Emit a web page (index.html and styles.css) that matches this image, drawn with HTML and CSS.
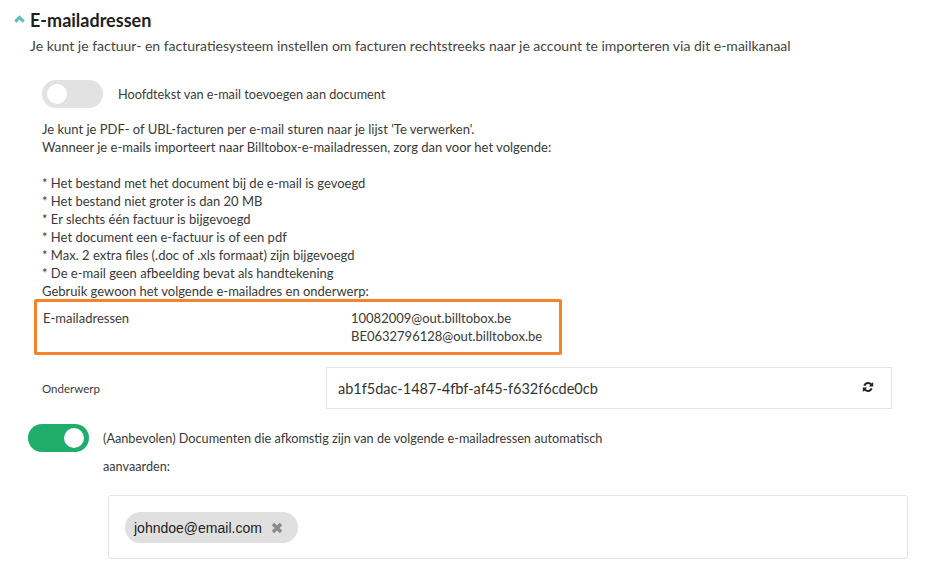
FILE: index.html
```html
<!doctype html>
<html lang="nl">

<head>
    <meta charset="UTF-8">
    <title>E-mailadressen</title>
    <link rel="stylesheet" href="styles.css">
</head>

<body>
    <section class="panel">
        <h2 class="panel-title">
            <svg class="chevron" width="11" height="8" viewBox="0 0 11 8">
                <path d="M1.3 6.6 L5.5 2.4 L9.7 6.6" fill="none" stroke="#5cbfb9" stroke-width="3"/>
            </svg>
            E-mailadressen
        </h2>
        <p class="intro">Je kunt je factuur- en facturatiesysteem instellen om facturen rechtstreeks naar je account te importeren via dit e-mailkanaal</p>

        <div class="switch-row first">
            <span class="switch"><span class="knob"></span></span>
            <span class="switch-label">Hoofdtekst van e-mail toevoegen aan document</span>
        </div>

        <div class="info">
            <p>Je kunt je PDF- of UBL-facturen per e-mail sturen naar je lijst 'Te verwerken'.<br>
            Wanneer je e-mails importeert naar Billtobox-e-mailadressen, zorg dan voor het volgende:</p>
            <p>* Het bestand met het document bij de e-mail is gevoegd<br>
            * Het bestand niet groter is dan 20 MB<br>
            * Er slechts één factuur is bijgevoegd<br>
            * Het document een e-factuur is of een pdf<br>
            * Max. 2 extra files (.doc of .xls formaat) zijn bijgevoegd<br>
            * De e-mail geen afbeelding bevat als handtekening<br>
            Gebruik gewoon het volgende e-mailadres en onderwerp:</p>
        </div>

        <div class="address-box">
            <span class="address-label">E-mailadressen</span>
            <span class="address-list">
                10082009@out.billtobox.be<br>
                BE0632796128@out.billtobox.be
            </span>
        </div>

        <div class="subject-row">
            <span class="subject-label">Onderwerp</span>
            <div class="subject-input">
                <span>ab1f5dac-1487-4fbf-af45-f632f6cde0cb</span>
                <svg class="refresh" width="12" height="12" viewBox="0 0 12 12">
                    <path d="M10 4.2 A4.3 4.3 0 0 0 2.3 4.6" fill="none" stroke="#222" stroke-width="2"/>
                    <path d="M11.2 1 L11.2 5.4 L6.8 5.4 Z" fill="#222"/>
                    <path d="M2 7.8 A4.3 4.3 0 0 0 9.7 7.4" fill="none" stroke="#222" stroke-width="2"/>
                    <path d="M0.8 11 L0.8 6.6 L5.2 6.6 Z" fill="#222"/>
                </svg>
            </div>
        </div>

        <div class="switch-row second">
            <span class="switch on"><span class="knob"></span></span>
            <span class="switch-label wide">(Aanbevolen) Documenten die afkomstig zijn van de volgende e-mailadressen automatisch aanvaarden:</span>
        </div>

        <div class="tag-box">
            <span class="tag">johndoe@email.com
                <svg class="tag-close" width="12" height="12" viewBox="0 0 12 12">
                    <path d="M2 2 L10 10 M10 2 L2 10" stroke="#8a8a8a" stroke-width="3.4"/>
                </svg>
            </span>
        </div>
    </section>
</body>
</html>
```

FILE: styles.css
```css
body {
    margin: 0;
    background-color: #fff;
    font-family: Lato, "Open Sans", sans-serif;
    color: #3a3a3a;
}

.panel {
    padding: 8px 0 0 14px;
}

.panel-title {
    display: flex;
    align-items: center;
    gap: 5px;
    margin: 0;
    font-size: 18px;
    font-weight: 700;
    color: #1f1f1f;
    line-height: 24px;
}

.chevron {
    margin-top: -3px;
}

.intro {
    margin: 3px 0 0 16px;
    font-size: 14px;
    line-height: 22px;
    color: #444;
}

.switch-row {
    display: flex;
    align-items: flex-start;
}

.switch-row.first {
    margin: 23px 0 0 28px;
    align-items: center;
}

.switch {
    flex: none;
    position: relative;
    width: 61px;
    height: 28px;
    border-radius: 14px;
    background-color: #e2e2e2;
}

.switch .knob {
    position: absolute;
    top: 4px;
    left: 5px;
    width: 20px;
    height: 20px;
    border-radius: 50%;
    background-color: #fff;
}

.switch.on {
    background-color: #20ad6c;
}

.switch.on .knob {
    left: auto;
    right: 5px;
}

.switch-label {
    margin-left: 15px;
    font-size: 12.7px;
    color: #3a3a3a;
}

.info {
    margin: 12px 0 0 28px;
    font-size: 13px;
    line-height: 18px;
    color: #3a3a3a;
}

.info p {
    margin: 0 0 18px;
}

.info p:last-child {
    margin: 0;
}

.address-box {
    display: flex;
    width: 510px;
    margin: -1px 0 0 20px;
    padding: 7px 6px 7px 6px;
    border: 3px solid #f6822a;
    border-radius: 2px;
    font-size: 13px;
    line-height: 18px;
    color: #3a3a3a;
}

.address-label {
    width: 308px;
}

.subject-row {
    display: flex;
    align-items: center;
    margin: 12px 0 0 28px;
}

.subject-label {
    width: 284px;
    font-size: 11.5px;
    color: #3a3a3a;
}

.subject-input {
    display: flex;
    align-items: center;
    justify-content: space-between;
    width: 536px;
    height: 40px;
    padding: 0 17px 0 11px;
    border: 1px solid #e4e4e4;
    font-size: 14.5px;
    color: #333;
}

.refresh {
    margin-top: -3px;
}

.switch-row.second {
    margin: 15px 0 0 14px;
}

.switch-label.wide {
    width: 540px;
    margin-left: 14px;
    line-height: 28px;
}

.tag-box {
    width: 766px;
    margin: 15px 0 0 94px;
    padding: 16px 16px 15px;
    border: 1px solid #e4e4e4;
    border-radius: 3px;
}

.tag {
    display: inline-flex;
    align-items: center;
    gap: 9px;
    height: 31px;
    padding: 0 15px 0 9px;
    border-radius: 16px;
    background-color: #e0e0e0;
    font-family: "Liberation Sans", Arial, sans-serif;
    font-size: 14px;
    color: #222;
}
```
